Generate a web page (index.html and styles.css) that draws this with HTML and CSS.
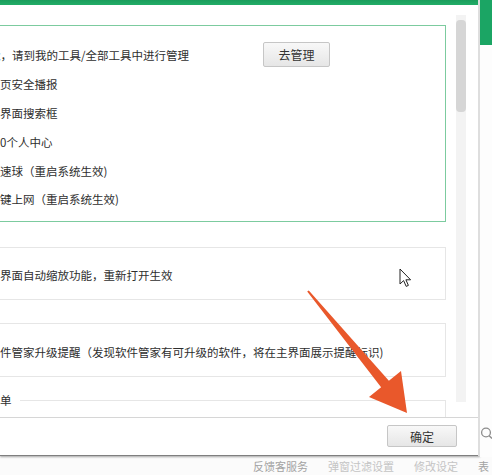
FILE: index.html
```html
<!DOCTYPE html>
<html lang="zh-CN">
<head>
<meta charset="utf-8">
<title>设置</title>
<link rel="stylesheet" href="styles.css">
</head>
<body>
<div class="screen">
  <div class="dialog">
    <div class="titlebar"></div>
    <div class="body">
      <div class="content">
        <div class="group group-green">
          <div class="row row-first"><span class="clip-first">能，请到我的工具/全部工具中进行管理</span><button class="btn btn-manage">去管理</button></div>
          <div class="row">页安全播报</div>
          <div class="row">界面搜索框</div>
          <div class="row">0个人中心</div>
          <div class="row">速球（重启系统生效)</div>
          <div class="row">键上网（重启系统生效)</div>
        </div>
        <div class="group group-one">
          <div class="row row-tall">界面自动缩放功能，重新打开生效</div>
        </div>
        <div class="group group-two">
          <div class="row row-tall">件管家升级提醒（发现软件管家有可升级的软件，将在主界面展示提醒标识)</div>
        </div>
        <div class="group group-legend">
          <span class="legend">单</span>
        </div>
      </div>
      <div class="scrollbar"><div class="thumb"></div></div>
    </div>
    <div class="footer">
      <button class="btn btn-ok">确定</button>
    </div>
  </div>
  <div class="side">
    <div class="side-green"></div>
    <svg class="search" width="12" height="16" viewBox="0 0 12 16"><circle cx="6" cy="5.5" r="4.4" fill="none" stroke="#8c8c8c" stroke-width="1.3"/><line x1="9.2" y1="8.7" x2="12" y2="11.5" stroke="#8c8c8c" stroke-width="1.4"/></svg>
  </div>
  <div class="links">
    <span>反馈客服务</span>
    <span class="faded">弹窗过滤设置</span>
    <span class="faded">修改设定</span>
    <span>表</span>
  </div>
  <svg class="arrow" width="492" height="475" viewBox="0 0 492 475"><polygon points="307.2,291.6 308.8,290.4 388.9,380.8 401,371 407,413 369,397 381.1,387.2" fill="#e9582b"/></svg>
  <svg class="cursor" width="14" height="20" viewBox="0 0 14 20"><path d="M1 1 L1 16 L4.6 12.6 L7.2 18.4 L9.4 17.4 L6.9 11.8 L11.6 11.8 Z" fill="#fff" stroke="#222" stroke-width="1" stroke-linejoin="round"/></svg>
</div>
</body>
</html>
```
FILE: styles.css
```css
* {
  box-sizing: border-box;
  margin: 0;
  padding: 0;
}

html, body {
  width: 492px;
  height: 475px;
  overflow: hidden;
}

body {
  font-family: "Noto Sans CJK SC", "Microsoft YaHei", sans-serif;
  font-size: 11.5px;
  color: #2e2e2e;
  background: #fbfbfb;
}

.screen {
  position: relative;
  width: 492px;
  height: 475px;
  display: grid;
  grid-template-columns: 480px 12px;
  grid-template-rows: 457px 18px;
}

.dialog {
  display: flex;
  flex-direction: column;
  height: 456px;
  background: #fff;
  border-right: 2px solid #dedede;
  box-shadow: 0 1px 2px rgba(0, 0, 0, 0.35);
}

.titlebar {
  height: 5px;
  flex: none;
  background: linear-gradient(#1b9d5c, #22ad68);
}

.body {
  height: 412px;
  flex: none;
  display: flex;
}

.content {
  width: 456px;
  height: 412px;
  overflow: hidden;
  padding-top: 20px;
}

.group {
  margin-left: -20px;
  margin-right: 10px;
  border: 1px solid #e6e6e6;
  padding-left: 19px;
}

.group-green {
  border-color: #7ccb9f;
  padding-top: 15px;
  padding-bottom: 7.2px;
}

.group-one {
  margin-top: 25px;
  padding-top: 4px;
  padding-bottom: 1px;
}

.group-two {
  margin-top: 23px;
  padding-top: 5px;
  padding-bottom: 1px;
}

.group-legend {
  margin-top: 23px;
  height: 30px;
  border-bottom: none;
  padding-left: 0;
}

.legend {
  display: inline-block;
  margin-top: -9px;
  margin-left: 19px;
  padding-right: 8px;
  line-height: 16px;
  background: #fff;
  vertical-align: top;
}

.row {
  height: 28.8px;
  display: flex;
  align-items: center;
  white-space: nowrap;
}

.row-tall {
  height: 46px;
}

.row-first {
  display: grid;
  grid-template-columns: 263px 67px;
  align-items: center;
}

.clip-first {
  margin-left: -11px;
}

.btn {
  font-family: inherit;
  font-size: 12px;
  color: #333;
  border: 1px solid #c6c6c6;
  border-radius: 2px;
  background: linear-gradient(#f8f8f8, #e6e6e6);
  cursor: default;
}

.btn-manage {
  height: 25px;
  width: 67px;
  margin-top: -2px;
}

.scrollbar {
  width: 10px;
  height: 387px;
  margin-top: 10px;
  background: #f3f3f3;
  flex: none;
}

.thumb {
  margin-top: 5px;
  height: 92px;
  background: #d6d6d6;
  border-radius: 4px;
}

.footer {
  height: 39px;
  flex: none;
  border-top: 1px solid #d6d6d6;
  border-bottom: 1px solid #7f7f7f;
  display: flex;
  justify-content: flex-end;
  align-items: flex-start;
  padding-top: 7px;
  padding-right: 21px;
}

.btn-ok {
  width: 70px;
  height: 22px;
}

.side {
  display: flex;
  flex-direction: column;
  background: #fdfdfd;
}

.side-green {
  height: 45px;
  background: #1ba564;
}

.search {
  margin-top: 382px;
}

.links {
  grid-column: 1 / span 2;
  display: flex;
  align-items: center;
  gap: 20px;
  padding-left: 253px;
  font-size: 11px;
  color: #a3a3a3;
  white-space: nowrap;
  overflow: hidden;
}

.faded {
  color: #c4c4c4;
}

.arrow {
  position: absolute;
  left: 0;
  top: 0;
  pointer-events: none;
}

.cursor {
  position: absolute;
  left: 399px;
  top: 268px;
  pointer-events: none;
}
```
